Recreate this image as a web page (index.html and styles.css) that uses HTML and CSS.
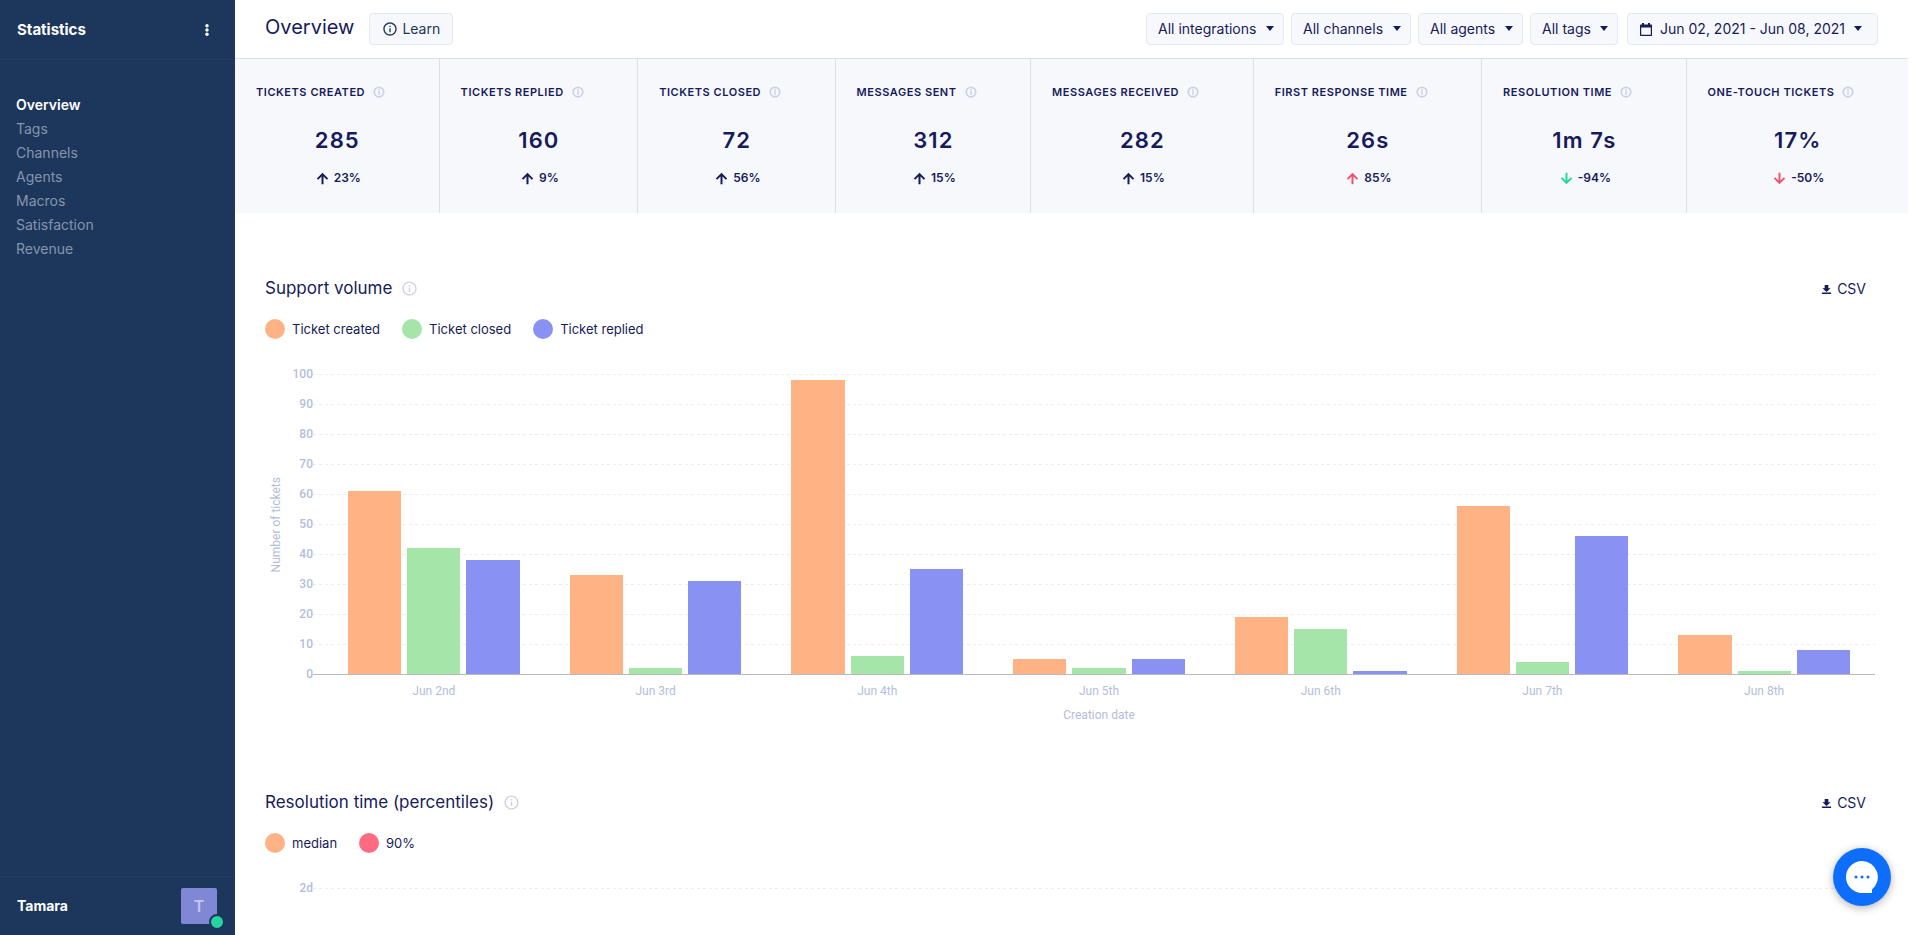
FILE: index.html
```html
<!DOCTYPE html>
<html lang="en">
<head>
<meta charset="utf-8">
<title>Statistics – Overview</title>
<link rel="stylesheet" href="styles.css">
</head>
<body>
<svg class="sprite" aria-hidden="true">
  <symbol id="info" viewBox="0 0 24 24"><path d="M11 7h2v2h-2zm0 4h2v6h-2zm1-9C6.480 2 2 6.480 2 12s4.480 10 10 10 10-4.480 10-10S17.520 2 12 2zm0 18c-4.410 0-8-3.590-8-8s3.590-8 8-8 8 3.590 8 8-3.590 8-8 8z"/></symbol>
  <symbol id="info-bold" viewBox="0 0 24 24"><circle cx="12" cy="12" r="9.500" fill="none" stroke="currentColor" stroke-width="3.500"/><path d="M10.500 6h3v3h-3zm0 4h3v8h-3z"/></symbol>
  <symbol id="up" viewBox="0 0 24 24"><path d="M4 12l1.900 1.900 4.700-4.700V20h2.800V9.200l4.700 4.700L20 12l-8-8z"/></symbol>
  <symbol id="down" viewBox="0 0 24 24"><path d="M20 12l-1.900-1.900-4.700 4.700V4h-2.800v10.800l-4.700-4.700L4 12l8 8z"/></symbol>
  <symbol id="download" viewBox="0 0 24 24"><path d="M21 9h-5V2H8v7H3l9 8.500zM2 18.500V22h20v-3.500z"/></symbol>
</svg>
<div class="app">
  <aside class="sidebar">
    <header class="sidebar-head">
      <h2 class="sidebar-title">Statistics</h2>
      <button class="more" type="button" aria-label="More"><svg viewBox="0 0 4 12" width="4" height="12"><circle cx="2" cy="1.800" r="1.700"/><circle cx="2" cy="6" r="1.700"/><circle cx="2" cy="10.200" r="1.700"/></svg></button>
    </header>
    <nav class="menu">
      <a class="menu-item active" href="#">Overview</a>
      <a class="menu-item" href="#">Tags</a>
      <a class="menu-item" href="#">Channels</a>
      <a class="menu-item" href="#">Agents</a>
      <a class="menu-item" href="#">Macros</a>
      <a class="menu-item" href="#">Satisfaction</a>
      <a class="menu-item" href="#">Revenue</a>
    </nav>
    <footer class="user">
      <span class="user-name">Tamara</span>
      <span class="avatar">T<span class="online"></span></span>
    </footer>
  </aside>

  <main class="main">
    <header class="topbar">
      <h1 class="page-title">Overview</h1>
      <button class="box learn" type="button"><svg class="icon-16"><use href="#info"/></svg>Learn</button>
      <div class="filters">
        <label class="box filter"><select aria-label="Integrations"><option>All integrations</option></select></label>
        <label class="box filter"><select aria-label="Channels"><option>All channels</option></select></label>
        <label class="box filter"><select aria-label="Agents"><option>All agents</option></select></label>
        <label class="box filter"><select aria-label="Tags"><option>All tags</option></select></label>
        <button class="box filter period" type="button"><svg class="calendar" viewBox="0 0 12 13"><path d="M2 0h2v1.500h4V0h2v1.500h1.200a.8.8 0 0 1 .8.8v9.900a.8.8 0 0 1-.8.800H.8a.8.8 0 0 1-.8-.800V2.300a.8.8 0 0 1 .8-.800H2zM1.200 4.500v7.300h9.600V4.500z"/></svg>Jun 02, 2021 - Jun 08, 2021</button>
      </div>
    </header>

    <section class="stats">
      <article class="stat"><h3 class="stat-label">Tickets created <svg class="stat-info"><use href="#info-bold"/></svg></h3><p class="stat-value">285</p><p class="stat-change"><svg class="arrow"><use href="#up"/></svg>23%</p></article>
      <article class="stat"><h3 class="stat-label">Tickets replied <svg class="stat-info"><use href="#info-bold"/></svg></h3><p class="stat-value">160</p><p class="stat-change"><svg class="arrow"><use href="#up"/></svg>9%</p></article>
      <article class="stat"><h3 class="stat-label">Tickets closed <svg class="stat-info"><use href="#info-bold"/></svg></h3><p class="stat-value">72</p><p class="stat-change"><svg class="arrow"><use href="#up"/></svg>56%</p></article>
      <article class="stat"><h3 class="stat-label">Messages sent <svg class="stat-info"><use href="#info-bold"/></svg></h3><p class="stat-value">312</p><p class="stat-change"><svg class="arrow"><use href="#up"/></svg>15%</p></article>
      <article class="stat"><h3 class="stat-label">Messages received <svg class="stat-info"><use href="#info-bold"/></svg></h3><p class="stat-value">282</p><p class="stat-change"><svg class="arrow"><use href="#up"/></svg>15%</p></article>
      <article class="stat"><h3 class="stat-label">First response time <svg class="stat-info"><use href="#info-bold"/></svg></h3><p class="stat-value">26s</p><p class="stat-change"><svg class="arrow bad"><use href="#up"/></svg>85%</p></article>
      <article class="stat"><h3 class="stat-label">Resolution time <svg class="stat-info"><use href="#info-bold"/></svg></h3><p class="stat-value">1m 7s</p><p class="stat-change"><svg class="arrow good"><use href="#down"/></svg>-94%</p></article>
      <article class="stat"><h3 class="stat-label">One-touch tickets <svg class="stat-info"><use href="#info-bold"/></svg></h3><p class="stat-value">17%</p><p class="stat-change"><svg class="arrow bad"><use href="#down"/></svg>-50%</p></article>
    </section>

    <section class="panel">
      <header class="panel-head">
        <h2 class="panel-title">Support volume</h2>
        <svg class="panel-info"><use href="#info"/></svg>
        <button class="csv" type="button"><svg class="csv-icon"><use href="#download"/></svg>CSV</button>
      </header>
      <ul class="legend">
        <li class="key orange">Ticket created</li>
        <li class="key green">Ticket closed</li>
        <li class="key blue">Ticket replied</li>
      </ul>
      <div class="chart">
        <div class="axis-title"><span>Number of tickets</span></div>
        <ol class="scale">
          <li>100</li><li>90</li><li>80</li><li>70</li><li>60</li><li>50</li><li>40</li><li>30</li><li>20</li><li>10</li><li>0</li>
        </ol>
        <div class="plot">
          <div class="group"><i class="bar orange" style="height:61%"></i><i class="bar green" style="height:42%"></i><i class="bar blue" style="height:38%"></i></div>
          <div class="group"><i class="bar orange" style="height:33%"></i><i class="bar green" style="height:2%"></i><i class="bar blue" style="height:31%"></i></div>
          <div class="group"><i class="bar orange" style="height:98%"></i><i class="bar green" style="height:6%"></i><i class="bar blue" style="height:35%"></i></div>
          <div class="group"><i class="bar orange" style="height:5%"></i><i class="bar green" style="height:2%"></i><i class="bar blue" style="height:5%"></i></div>
          <div class="group"><i class="bar orange" style="height:19%"></i><i class="bar green" style="height:15%"></i><i class="bar blue" style="height:1%"></i></div>
          <div class="group"><i class="bar orange" style="height:56%"></i><i class="bar green" style="height:4%"></i><i class="bar blue" style="height:46%"></i></div>
          <div class="group"><i class="bar orange" style="height:13%"></i><i class="bar green" style="height:1%"></i><i class="bar blue" style="height:8%"></i></div>
        </div>
        <div class="dates"><span>Jun 2nd</span><span>Jun 3rd</span><span>Jun 4th</span><span>Jun 5th</span><span>Jun 6th</span><span>Jun 7th</span><span>Jun 8th</span></div>
        <div class="dates-title">Creation date</div>
      </div>
    </section>

    <section class="panel">
      <header class="panel-head">
        <h2 class="panel-title">Resolution time (percentiles)</h2>
        <svg class="panel-info"><use href="#info"/></svg>
        <button class="csv" type="button"><svg class="csv-icon"><use href="#download"/></svg>CSV</button>
      </header>
      <ul class="legend">
        <li class="key orange">median</li>
        <li class="key red">90%</li>
      </ul>
      <div class="chart">
        <div class="axis-title"></div>
        <ol class="scale"><li>2d</li></ol>
        <div class="plot sparse"></div>
      </div>
    </section>
  </main>
</div>
<button class="chat" type="button" aria-label="Open chat">
  <svg viewBox="0 0 32 32" width="32" height="32"><path fill="#fff" d="M16 0a16 16 0 1 0 0 32h10v-3.600A16 16 0 0 0 16 0z"/><g fill="#0d6efd"><circle cx="10" cy="16" r="1.500"/><circle cx="16" cy="16" r="1.500"/><circle cx="22" cy="16" r="1.500"/></g></svg>
</button>
</body>
</html>
```
FILE: styles.css
```css
* { box-sizing: border-box; }
body, h1, h2, h3, p, ul, ol { margin: 0; padding: 0; }
ul, ol { list-style: none; }
body {
  font-family: Inter, "Liberation Sans", sans-serif;
  font-size: 14px;
  line-height: 20px;
  color: #161b5b;
  background: #fff;
  overflow: hidden;
}
button, select {
  font: inherit;
  color: inherit;
  background: none;
  border: 0;
  padding: 0;
  margin: 0;
  appearance: none;
}
svg { fill: currentColor; flex: none; }
.sprite { position: absolute; width: 0; height: 0; }

.app { display: flex; height: 100vh; }

/* Sidebar */
.sidebar {
  display: flex;
  flex-direction: column;
  flex: none;
  width: 235px;
  background: #1d365c;
  color: #fff;
}
.sidebar-head {
  display: flex;
  align-items: center;
  justify-content: space-between;
  height: 60px;
  padding: 1px 26px 0 17px;
  border-bottom: 1px solid #213c65;
}
.sidebar-title { font-size: 15px; font-weight: 700; }
.more { display: flex; }
.menu { display: flex; flex-direction: column; flex: 1; padding: 33px 16px; }
.menu-item { line-height: 24px; color: #8695ac; text-decoration: none; }
.menu-item.active { color: #fff; font-weight: 600; }
.user {
  display: flex;
  align-items: center;
  justify-content: space-between;
  height: 59px;
  padding: 0 18px 0 17px;
  border-top: 1px solid #213c65;
}
.user-name { font-weight: 700; }
.avatar {
  position: relative;
  width: 36px;
  height: 36px;
  border-radius: 2px;
  background: #8088d6;
  color: #c3c7f0;
  font-size: 16px;
  font-weight: 600;
  line-height: 36px;
  text-align: center;
}
.online {
  position: absolute;
  right: -8px;
  bottom: -6px;
  width: 16px;
  height: 16px;
  border: 2px solid #1d365c;
  border-radius: 50%;
  background: #24d69d;
}

/* Main column */
.main { flex: 1; min-width: 0; padding-right: 8px; overflow: hidden; }
.topbar {
  display: flex;
  align-items: center;
  height: 59px;
  padding: 0 30px;
  border-bottom: 1px solid #dcdfeb;
}
.page-title { font-size: 20px; font-weight: 400; line-height: 26px; padding-bottom: 4px; }
.box {
  display: inline-flex;
  align-items: center;
  height: 32px;
  padding: 0 11px;
  border: 1px solid #e6e8ef;
  border-radius: 4px;
  background: #f7f8fb;
}
.learn { margin-left: 15px; padding: 0 12px; gap: 4px; color: #1d365c; }
.icon-16 { width: 16px; height: 16px; }
.filters { display: flex; gap: 7px; margin-left: auto; }
.filter { padding: 0 9px 0 11px; }
.filter::after {
  content: "";
  margin: 0 0 2px 9px;
  border: 4px solid transparent;
  border-top: 5px solid #161b5b;
  border-bottom: 0;
}
.period { margin-left: 2px; padding: 0 15px 0 12px; }
.calendar { width: 12px; height: 13px; margin-right: 8px; }

/* Stat tiles */
.stats { display: flex; background: #f7f8fb; }
.stat {
  flex: 1 1 auto;
  padding: 23px 20px 25px 21px;
  border-right: 1px solid #dcdfeb;
  text-align: center;
}
.stat:last-child { border-right: 0; }
.stat-label {
  display: flex;
  align-items: center;
  gap: 8px;
  font-size: 11px;
  font-weight: 600;
  letter-spacing: 0.05em;
  text-transform: uppercase;
  white-space: nowrap;
}
.stat-info { width: 12px; height: 12px; color: #cfd2e6; }
.stat-value { margin-top: 24px; font-size: 22px; font-weight: 600; line-height: 28px; letter-spacing: 0.05em; }
.stat-change {
  display: flex;
  align-items: center;
  justify-content: center;
  gap: 3px;
  margin-top: 14px;
  font-size: 12px;
  font-weight: 600;
  line-height: 20px;
}
.arrow { width: 17px; height: 17px; }
.bad { color: #f4516c; }
.good { color: #24d69d; }

/* Chart panels */
.panel { padding: 63px 33px 0 30px; }
.panel + .panel { padding-top: 67px; }
.panel-head { display: flex; align-items: center; height: 24px; }
.panel-title { font-size: 17px; font-weight: 400; line-height: 24px; }
.panel-info { width: 17px; height: 17px; margin-left: 9px; color: #cfd2e6; }
.csv { display: flex; align-items: center; gap: 5px; margin: 2px 9px 0 auto; }
.csv-icon { width: 11px; height: 11px; }
.legend { display: flex; gap: 22px; margin-top: 19px; }
.key { display: flex; align-items: center; gap: 7px; font-size: 13px; }
.key::before { content: ""; width: 20px; height: 20px; border-radius: 50%; background: var(--series); }
.orange { --series: #ffb384; }
.green { --series: #a5e5aa; }
.blue { --series: #8991f3; }
.red { --series: #ff6b82; }

.chart {
  display: grid;
  grid-template-columns: 21px 27px 1fr;
  margin-top: 35px;
  color: #b4bddb;
  font-family: Roboto, sans-serif;
  font-size: 12px;
  line-height: 16px;
}
.axis-title { display: flex; align-items: center; justify-content: center; }
.axis-title span { writing-mode: vertical-rl; rotate: 180deg; }
.scale { font-weight: 500; text-align: right; margin: -8px 0 -21px; }
.scale li { height: 30px; }
.plot {
  display: grid;
  grid-template-columns: repeat(7, 1fr);
  height: 301px;
  padding-left: 10px;
  border-bottom: 1px solid #b9b9bd;
  background:
    repeating-linear-gradient(90deg, transparent 0 3px, #fff 3px 6px),
    repeating-linear-gradient(#ebecf0 0 1px, #fff 1px 30px);
}
.plot.sparse {
  background:
    repeating-linear-gradient(90deg, transparent 0 3px, #fff 3px 6px),
    repeating-linear-gradient(#ebecf0 0 1px, #fff 1px 60px);
}
.group { display: flex; align-items: flex-end; gap: 6px; padding: 0 25px; }
.bar { flex: 1; background: var(--series); }
.dates { grid-column: 3; display: grid; grid-template-columns: repeat(7, 1fr); margin-top: 8px; padding-left: 10px; text-align: center; }
.dates-title { grid-column: 3; margin-top: 8px; padding-left: 10px; text-align: center; }

.chat {
  position: fixed;
  right: 25px;
  bottom: 29px;
  display: flex;
  align-items: center;
  justify-content: center;
  width: 58px;
  height: 58px;
  border-radius: 50%;
  background: #0d6efd;
  box-shadow: 0 2px 8px rgba(0, 0, 0, 0.3);
}
```
